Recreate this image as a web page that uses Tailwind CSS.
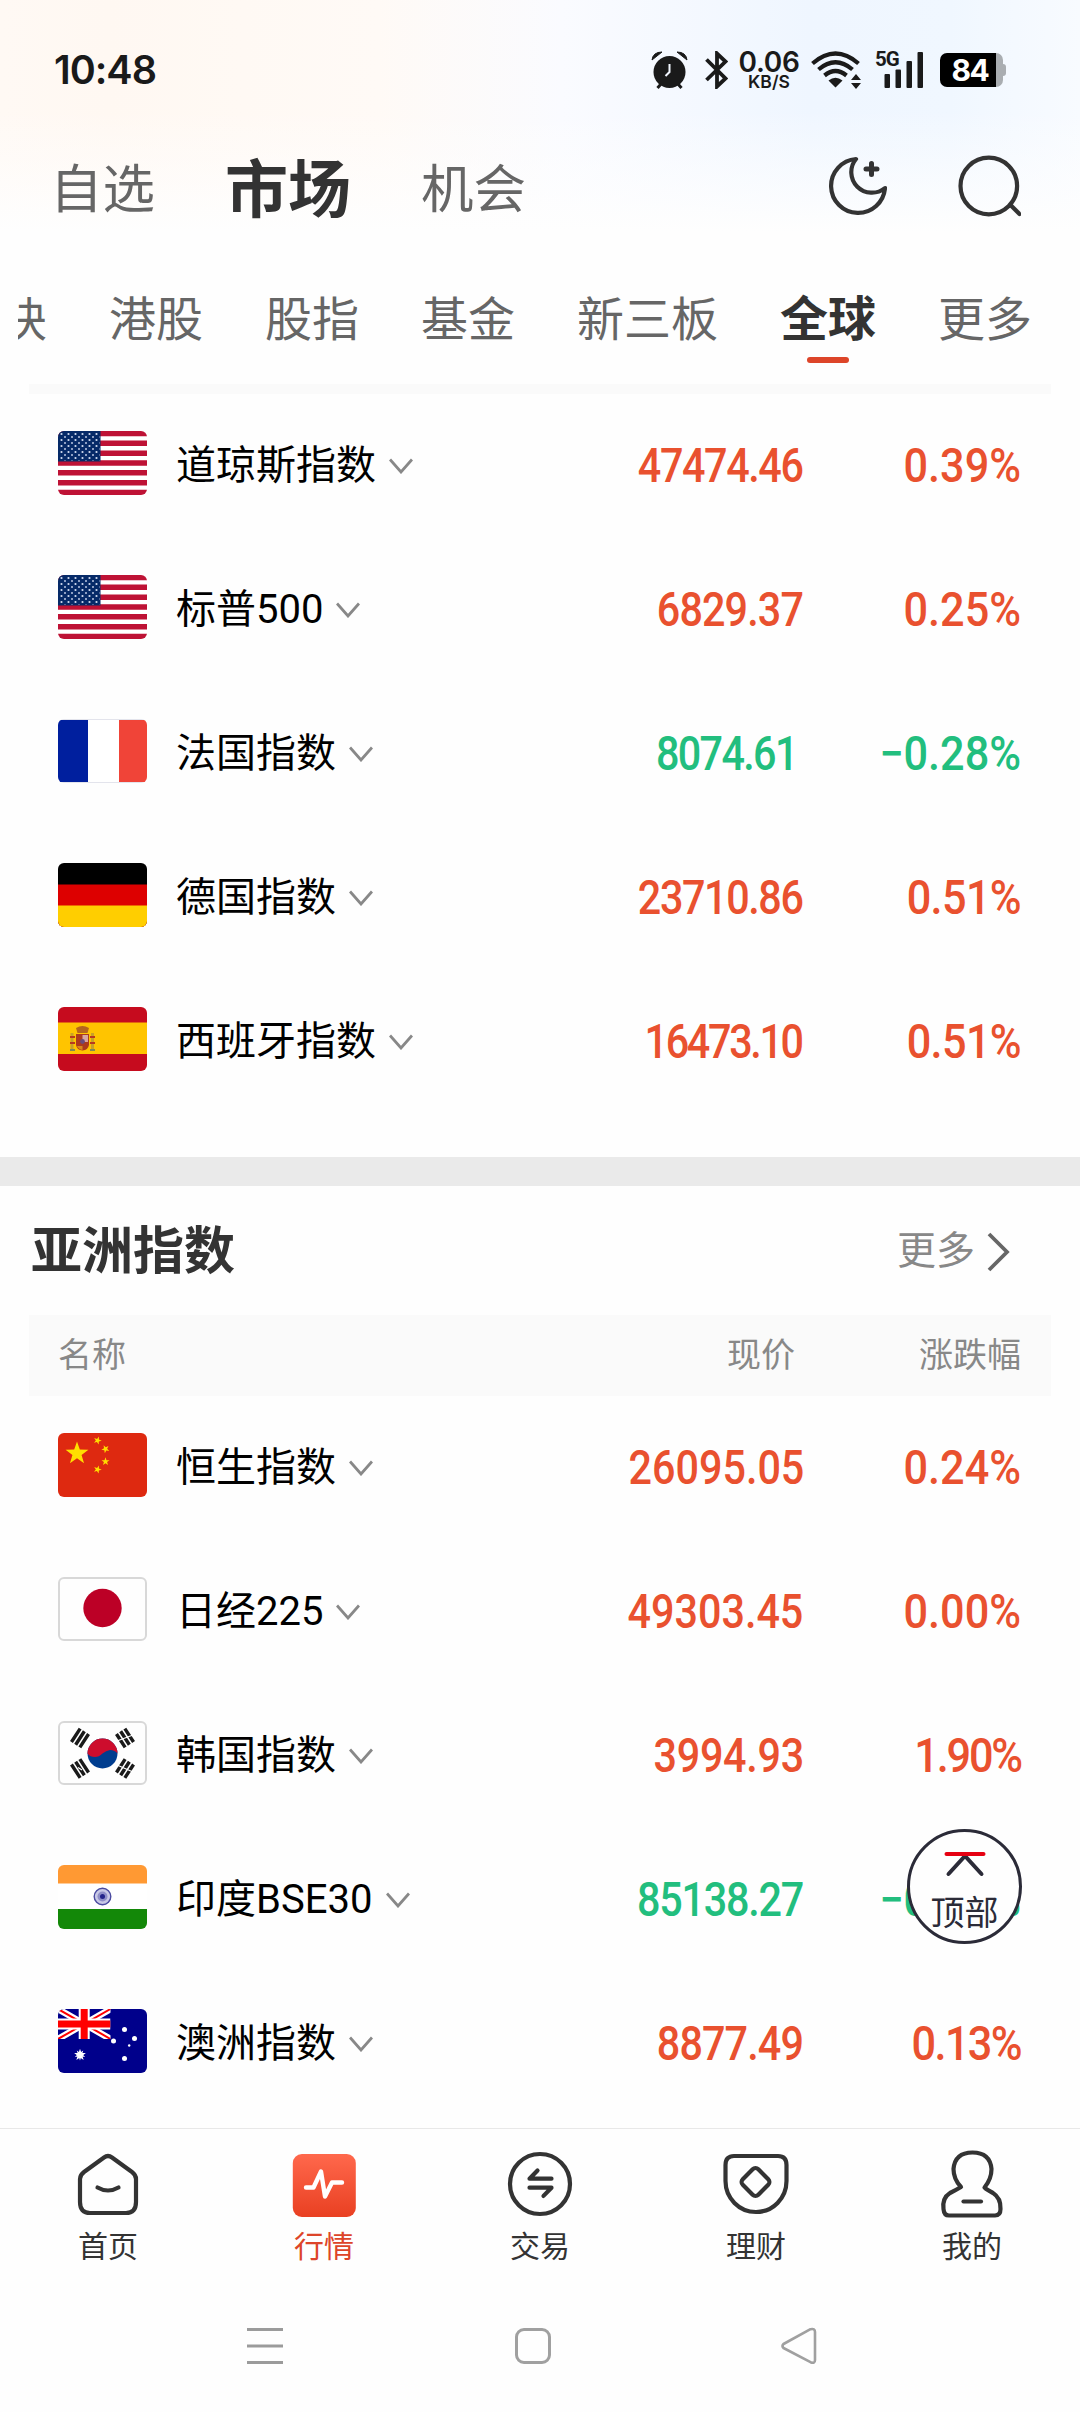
<!DOCTYPE html>
<html lang="zh-CN">
    <head>
        <meta charset="UTF-8" />
        <meta name="viewport" content="width=device-width, initial-scale=1.0" />
        <script src="https://cdn.jsdelivr.net/npm/@tailwindcss/browser@4"></script>
        <title>市场 - 全球</title>
    </head>
    <body class="bg-[#fefefe] font-[Roboto,'Noto_Sans_CJK_SC',sans-serif] text-black">
        <!-- Shared shapes -->
        <svg class="absolute h-0 w-0">
            <defs>
                <symbol id="chevron" viewBox="0 0 24 16">
                    <path d="M1 1.5 12 14 23 1.5" fill="none" stroke="#888" stroke-width="2.8" />
                </symbol>
                <polygon
                    id="star"
                    points="0,-10 2.35,-3.24 9.51,-3.09 3.8,1.24 5.88,8.09 0,4 -5.88,8.09 -3.8,1.24 -9.51,-3.09 -2.35,-3.24"
                />
                <pattern id="dots" width="7" height="6" patternUnits="userSpaceOnUse">
                    <circle cx="3.5" cy="3" r="1.1" fill="#d3dcf0" />
                    <circle cx="0" cy="0" r="1" fill="#b9c6e2" />
                    <circle cx="7" cy="0" r="1" fill="#b9c6e2" />
                    <circle cx="0" cy="6" r="1" fill="#b9c6e2" />
                    <circle cx="7" cy="6" r="1" fill="#b9c6e2" />
                </pattern>
                <symbol id="flag-us" viewBox="0 0 89 64">
                    <rect width="89" height="64" fill="#fff" />
                    <path
                        d="M0 2.46H89M0 12.3H89M0 22.2H89M0 32H89M0 41.8H89M0 51.7H89M0 61.5H89"
                        stroke="#be1235"
                        stroke-width="5.4"
                    />
                    <rect width="42.5" height="30.5" fill="#062a68" />
                    <rect x="1" y="1" width="40.5" height="28.5" fill="url(#dots)" />
                </symbol>
                <g id="bars" stroke="#1a1a1a" stroke-width="3.4">
                    <path d="M-8-5H8M-8 0H8M-8 5H8" />
                </g>
            </defs>
        </svg>

        <div class="flex h-[2412px] w-[1080px] flex-col overflow-hidden">
            <header
                class="h-[244px] shrink-0 bg-[linear-gradient(to_bottom,transparent_110px,#fefefe_232px),linear-gradient(to_right,#fff9f4,#fff8f2_10%,#fffaf6_35%,#fafbff_52%,#eff6ff_75%,#f0f7ff_88%,#f8fbff)]"
            >
                <!-- Status bar -->
                <div class="flex h-[140px] items-center justify-between pr-[74px] pl-[54px]">
                    <div class="pt-[2px] font-[Inter] text-[39.5px] font-semibold tracking-[-1px] text-[#1a1a1a]">10:48</div>
                    <div class="flex items-center text-[#1a1a1a]">
                        <!-- Alarm -->
                        <svg class="h-[38px] w-[37px]" viewBox="0 0 37 38">
                            <circle cx="18.5" cy="21" r="16" fill="currentColor" />
                            <path d="M1 9Q2 1 11 1Z M36 9Q35 1 26 1Z" fill="currentColor" stroke="currentColor" />
                            <path d="M10 33 6.5 37M27 33 30.5 37" stroke="currentColor" stroke-width="3" />
                            <path d="M18.5 13V21L14.5 25" fill="none" stroke="#f2f7ff" stroke-width="2" />
                        </svg>
                        <!-- Bluetooth -->
                        <svg class="ml-[17px] h-[38px] w-[23px]" viewBox="0 0 23 38">
                            <path
                                d="M1.5 8.5 20.5 27.5 12 35.5V2.5L20.5 10.5 1.5 29"
                                fill="none"
                                stroke="currentColor"
                                stroke-width="3.8"
                            />
                        </svg>
                        <div class="ml-[12px] flex w-[58px] flex-col items-center font-[Inter] font-semibold">
                            <span class="text-[28px] leading-[23px] tracking-[-0.3px]">0.06</span>
                            <span class="text-[17.5px] leading-[15px]">KB/S</span>
                        </div>
                        <!-- Wifi -->
                        <svg class="ml-[13px] h-[38px] w-[51px]" viewBox="0 0 51 38">
                            <g fill="none" stroke="currentColor" stroke-width="4.2">
                                <path d="M1.5 12.5Q24.5-7.5 47.5 12.5" />
                                <path d="M7.5 18.5Q24.5 4 41.5 18.5" />
                                <path d="M13.5 24.5Q24.5 15.5 35.5 24.5" />
                            </g>
                            <path
                                d="M24.5 36.5 17.5 29.5Q24.5 24 31.5 29.5Z M40 29 45 23 50 29Z M40 32H50L45 38Z"
                                fill="currentColor"
                            />
                        </svg>
                        <div class="relative ml-[13px] h-[38px] w-[48px]">
                            <span class="absolute -top-[2px] left-0 font-[Roboto] text-[20.5px] leading-5 font-bold tracking-[-1px]"
                                >5G</span
                            >
                            <svg class="h-[38px] w-[48px]" viewBox="0 0 48 38" fill="currentColor">
                                <rect x="9.5" y="23" width="5.5" height="14" rx="1" />
                                <rect x="20.5" y="18.5" width="5.5" height="18.5" rx="1" />
                                <rect x="31.5" y="10" width="5.5" height="27" rx="1" />
                                <rect x="42.5" y="1" width="5.5" height="36" rx="1" />
                            </svg>
                        </div>
                        <!-- Battery -->
                        <div class="ml-[17px] flex items-center">
                            <div
                                class="flex h-[34px] w-[56px] items-center justify-center rounded-l-[7px] bg-black pl-[4px] font-[Inter] text-[30px] font-bold tracking-[-1.5px] text-white"
                            >
                                84
                            </div>
                            <div class="h-[34px] w-[7px] rounded-r-[7px] bg-[#a9adb1]"></div>
                            <div class="h-3 w-[3px] rounded-r bg-[#a9adb1]"></div>
                        </div>
                    </div>
                </div>

                <!-- Main tabs -->
                <div class="flex h-[92px] items-center pr-[59px] pl-[50px] text-[#666]">
                    <div class="flex flex-1 items-center gap-[70px] pt-[8px]">
                        <a class="text-[52.5px] leading-none">自选</a>
                        <a class="text-[63px] leading-none font-bold text-[#333]">市场</a>
                        <a class="text-[52.5px] leading-none">机会</a>
                    </div>
                    <svg
                        class="h-[60px] w-[60px]"
                        viewBox="827 156 60 60"
                        fill="none"
                        stroke="#333"
                        stroke-width="4.2"
                        stroke-linejoin="round"
                        stroke-linecap="round"
                    >
                        <path d="M856 159A27 27 0 1 0 885 188A20.6 20.6 0 0 1 856 159Z" />
                        <path d="M871.5 163.5V174.5M866 169H877" stroke-width="5" />
                    </svg>
                    <svg
                        class="ml-[70px] h-[62px] w-[64px]"
                        viewBox="957 155 64 62"
                        fill="none"
                        stroke="#333"
                        stroke-width="4.2"
                        stroke-linecap="round"
                    >
                        <circle cx="988.8" cy="186" r="28.3" />
                        <path d="M1010.5 205 1019.5 214" />
                    </svg>
                </div>
            </header>

            <!-- Category tabs -->
            <nav class="ml-[18px] flex h-[140px] shrink-0 gap-[62px] overflow-hidden pt-[51px] text-[47px] leading-[50px] whitespace-nowrap text-[#666]">
                <a class="-ml-[18px]">块</a>
                <a>港股</a>
                <a>股指</a>
                <a>基金</a>
                <a>新三板</a>
                <a class="flex flex-col items-center text-[48px] font-bold text-[#333]">
                    全球
                    <span class="mt-[12px] h-[6px] w-[42px] rounded-full bg-[#dd4529]"></span>
                </a>
                <a>更多</a>
            </nav>

            <div class="mx-[29px] h-[10px] shrink-0 bg-[#fafafa]"></div>

            <!-- Europe & America -->
            <section class="-mt-[3px] h-[766px] shrink-0 pr-[59px] pl-[58px] text-[40px]">
                <div class="flex h-36 items-center">
                    <svg class="h-16 w-[89px] rounded-md"><use href="#flag-us" /></svg>
                    <span class="ml-[29px] pt-[5px]">道琼斯指数</span>
                    <svg class="ml-[13px] h-4 w-6 flex-none translate-y-[3px]"><use href="#chevron" /></svg>
                    <span class="ml-auto origin-right scale-x-86 pt-[6px] text-[48px] font-medium tracking-[-1.6px] text-[#e9512f]">47474.46</span>
                    <span class="w-[218px] origin-right scale-x-90 pt-[6px] text-right text-[48px] font-medium text-[#e9512f]">0.39%</span>
                </div>
                <div class="flex h-36 items-center">
                    <svg class="h-16 w-[89px] rounded-md"><use href="#flag-us" /></svg>
                    <span class="ml-[29px] pt-[5px]">标普500</span>
                    <svg class="ml-[13px] h-4 w-6 flex-none translate-y-[3px]"><use href="#chevron" /></svg>
                    <span class="ml-auto origin-right scale-x-86 pt-[6px] text-[48px] font-medium tracking-[-1px] text-[#e9512f]">6829.37</span>
                    <span class="w-[218px] origin-right scale-x-90 pt-[6px] text-right text-[48px] font-medium text-[#e9512f]">0.25%</span>
                </div>
                <div class="flex h-36 items-center">
                    <svg class="h-16 w-[89px] rounded-md" viewBox="0 0 89 64">
                        <rect width="89" height="64" fill="#e3e4ec" />
                        <rect y="1" width="89" height="62" fill="#fff" />
                        <rect y="1" width="30" height="62" fill="#001f9e" />
                        <rect x="61" y="1" width="28" height="62" fill="#f04438" />
                    </svg>
                    <span class="ml-[29px] pt-[5px]">法国指数</span>
                    <svg class="ml-[13px] h-4 w-6 flex-none translate-y-[3px]"><use href="#chevron" /></svg>
                    <span class="mr-[6px] ml-auto origin-right scale-x-86 pt-[6px] text-[48px] font-medium tracking-[-1.9px] text-[#22be7e]">8074.61</span>
                    <span class="w-[218px] origin-right scale-x-90 pt-[6px] text-right text-[48px] font-medium text-[#22be7e]">−0.28%</span>
                </div>
                <div class="flex h-36 items-center">
                    <svg class="h-16 w-[89px] rounded-md" viewBox="0 0 89 64">
                        <rect width="89" height="64" fill="#000" />
                        <rect y="21.5" width="89" height="43" fill="#dd0000" />
                        <rect y="42.5" width="89" height="22" fill="#ffce00" />
                    </svg>
                    <span class="ml-[29px] pt-[5px]">德国指数</span>
                    <svg class="ml-[13px] h-4 w-6 flex-none translate-y-[3px]"><use href="#chevron" /></svg>
                    <span class="ml-auto origin-right scale-x-86 pt-[6px] text-[48px] font-medium tracking-[-1.6px] text-[#e9512f]">23710.86</span>
                    <span class="w-[218px] origin-right scale-x-90 pt-[6px] text-right text-[48px] font-medium tracking-[-0.7px] text-[#e9512f]">0.51%</span>
                </div>
                <div class="flex h-36 items-center">
                    <svg class="h-16 w-[89px] rounded-md" viewBox="0 0 89 64">
                        <rect width="89" height="64" fill="#c60b1e" />
                        <rect y="15.5" width="89" height="31.5" fill="#ffc400" />
                        <path d="M14 26V42M34.5 26V42" stroke="#c9a227" stroke-width="3" />
                        <path d="M12 30H17M12 36H17M32 30H37M32 36H37" stroke="#b8391f" stroke-width="1.8" />
                        <path d="M12 43H17M32 43H37" stroke="#7d8a55" stroke-width="2" />
                        <path d="M18 21Q24.5 17 31 21L29.5 26H19.5Z" fill="#b5651d" />
                        <path d="M18 27H31V38Q30 43 24.5 43.5Q19 43 18 38Z" fill="#ad3a1c" />
                        <path d="M24.5 28H30V35H24.5Z" fill="#d9a6a0" />
                        <circle cx="24.5" cy="34.5" r="2.4" fill="#6a4a7a" />
                        <path d="M19 39H24.5V43Q20 42 19 39Z" fill="#d88a1a" />
                    </svg>
                    <span class="ml-[29px] pt-[5px]">西班牙指数</span>
                    <svg class="ml-[13px] h-4 w-6 flex-none translate-y-[3px]"><use href="#chevron" /></svg>
                    <span class="ml-auto origin-right scale-x-86 pt-[6px] text-[48px] font-medium tracking-[-2.7px] text-[#e9512f]">16473.10</span>
                    <span class="w-[219px] origin-right scale-x-90 pt-[6px] text-right text-[48px] font-medium tracking-[-0.7px] text-[#e9512f]">0.51%</span>
                </div>
            </section>

            <div class="h-[29px] shrink-0 bg-[#eaeaea]"></div>

            <!-- Asia -->
            <div class="flex h-[129px] shrink-0 items-center justify-between pt-[2px] pr-[70px] pl-[31px]">
                <h2 class="text-[51px] leading-none font-bold text-[#333]">亚洲指数</h2>
                <a class="flex items-center text-[39px] leading-none text-[#888]">
                    更多
                    <svg class="ml-[11px] h-[40px] w-[24px]" viewBox="0 0 24 40" fill="none" stroke="#666" stroke-width="3.8">
                        <path d="M3 2 21 20 3 38" />
                    </svg>
                </a>
            </div>
            <div class="mx-[29px] flex h-[81px] shrink-0 items-center bg-[#fafafa] pr-[30px] pb-[1px] pl-[29px] text-[34px] leading-none text-[#888]">
                <span>名称</span>
                <span class="ml-auto">现价</span>
                <span class="w-[226px] text-right">涨跌幅</span>
            </div>
            <section class="-mt-[3px] h-[735px] shrink-0 pr-[59px] pl-[58px] text-[40px]">
                <div class="flex h-36 items-center">
                    <svg class="h-16 w-[89px] rounded-md" viewBox="0 0 89 64">
                        <rect width="89" height="64" fill="#de2910" />
                        <g fill="#ffde00">
                            <use href="#star" transform="translate(19 20.5) scale(1.2)" />
                            <use href="#star" transform="translate(39.5 7.5) rotate(20) scale(.42)" />
                            <use href="#star" transform="translate(47.5 16) rotate(45) scale(.42)" />
                            <use href="#star" transform="translate(47.5 28.5) scale(.42)" />
                            <use href="#star" transform="translate(39.5 36.5) rotate(20) scale(.42)" />
                        </g>
                    </svg>
                    <span class="ml-[29px] pt-[5px]">恒生指数</span>
                    <svg class="ml-[13px] h-4 w-6 flex-none translate-y-[3px]"><use href="#chevron" /></svg>
                    <span class="ml-auto origin-right scale-x-86 pt-[6px] text-[48px] font-medium text-[#e9512f]">26095.05</span>
                    <span class="w-[217px] origin-right scale-x-90 pt-[6px] text-right text-[48px] font-medium text-[#e9512f]">0.24%</span>
                </div>
                <div class="flex h-36 items-center">
                    <svg class="h-16 w-[89px] rounded-md border-2 border-[#d8d8d8]" viewBox="2 2 85 60">
                        <circle cx="44.5" cy="31" r="19.2" fill="#bc0026" />
                    </svg>
                    <span class="ml-[29px] pt-[5px]">日经225</span>
                    <svg class="ml-[13px] h-4 w-6 flex-none translate-y-[3px]"><use href="#chevron" /></svg>
                    <span class="ml-auto origin-right scale-x-86 pt-[6px] text-[48px] font-medium text-[#e9512f]">49303.45</span>
                    <span class="w-[218px] origin-right scale-x-90 pt-[6px] text-right text-[48px] font-medium text-[#e9512f]">0.00%</span>
                </div>
                <div class="flex h-36 items-center">
                    <svg class="h-16 w-[89px] rounded-md border-2 border-[#d8d8d8]" viewBox="2 2 85 60">
                        <circle cx="44.5" cy="32.5" r="15" fill="#003d8f" />
                        <path
                            d="M29.5 32.5A15 15 0 0 1 59.5 32.5Q57 29 52 29Q48 29.5 44.5 32.5Q41 36 37 36Q32 36 29.5 32.5Z"
                            fill="#cd0d2d"
                        />
                        <use href="#bars" transform="translate(22 17) rotate(-57)" />
                        <use href="#bars" transform="translate(67 17) rotate(57)" />
                        <use href="#bars" transform="translate(22 47.5) rotate(57)" />
                        <use href="#bars" transform="translate(67 47.5) rotate(-57)" />
                        <path d="M59 20 75 14M20 46.5 24 49M59 44 75 51" stroke="#fff" stroke-width="1.2" />
                    </svg>
                    <span class="ml-[29px] pt-[5px]">韩国指数</span>
                    <svg class="ml-[13px] h-4 w-6 flex-none translate-y-[3px]"><use href="#chevron" /></svg>
                    <span class="ml-auto origin-right scale-x-86 pt-[6px] text-[48px] font-medium tracking-[-0.3px] text-[#e9512f]">3994.93</span>
                    <span class="w-[217px] origin-right scale-x-90 pt-[6px] text-right text-[48px] font-medium tracking-[-2.4px] text-[#e9512f]">1.90%</span>
                </div>
                <div class="relative flex h-36 items-center">
                    <svg class="h-16 w-[89px] rounded-md" viewBox="0 0 89 64">
                        <rect width="89" height="64" fill="#fff" />
                        <rect width="89" height="18.5" fill="#ff9933" />
                        <rect y="44" width="89" height="20" fill="#138808" />
                        <circle cx="44.5" cy="31.5" r="8.3" fill="#c9c9e6" stroke="#4a4aa0" stroke-width="1.4" />
                        <circle cx="44.5" cy="31.5" r="5" fill="#8f8fc8" />
                        <circle cx="44.5" cy="31.5" r="2.5" fill="#24248a" />
                    </svg>
                    <span class="ml-[29px] pt-[5px]">印度BSE30</span>
                    <svg class="ml-[14px] h-4 w-6 flex-none translate-y-[3px]"><use href="#chevron" /></svg>
                    <span class="ml-auto origin-right scale-x-86 pt-[6px] text-[48px] font-medium tracking-[-1.4px] text-[#22be7e]">85138.27</span>
                    <span class="w-[218px] origin-right scale-x-90 pt-[6px] text-right text-[48px] font-medium text-[#22be7e]">−0.08%</span>
                    <!-- Back to top -->
                    <button
                        class="absolute top-[4px] -right-[1px] flex h-[115px] w-[115px] flex-col items-center rounded-full border-[3px] border-[#2b2b38] bg-[#fefefe] pt-[19px] text-[34px] leading-[34px] text-[#2b2b38]"
                    >
                        <svg class="h-[26px] w-[42px]" viewBox="0 0 42 26" fill="none" stroke-width="4" stroke-linecap="round">
                            <path d="M4.5 23 21 5 37.5 23" stroke="#2b2b38" />
                            <path d="M2.5 3H39.5" stroke="#e60012" />
                        </svg>
                        <span class="mt-[19px]">顶部</span>
                    </button>
                </div>
                <div class="flex h-36 items-center">
                    <svg class="h-16 w-[89px] rounded-md" viewBox="0 0 89 64">
                        <rect width="89" height="64" fill="#00008b" />
                        <svg width="52.5" height="30" viewBox="0 0 52.5 30">
                            <path d="M0 0 52.5 30M52.5 0 0 30" stroke="#fff" stroke-width="6.5" />
                            <path d="M0 0 52.5 30M52.5 0 0 30" stroke="#f00" stroke-width="2" />
                            <path d="M26.2 0V30M0 15H52.5" stroke="#fff" stroke-width="11" />
                            <path d="M26.2 0V30M0 15H52.5" stroke="#f00" stroke-width="7" />
                        </svg>
                        <g fill="#fff">
                            <use href="#star" transform="translate(22 46) scale(.62)" />
                            <use href="#star" transform="translate(22 46) rotate(180) scale(.55)" />
                            <circle cx="66.5" cy="20.5" r="2.5" />
                            <circle cx="76.5" cy="29.5" r="2.5" />
                            <circle cx="55.5" cy="32" r="2.5" />
                            <circle cx="66.5" cy="49.5" r="2.5" />
                            <circle cx="71.2" cy="36.5" r="1.2" />
                        </g>
                    </svg>
                    <span class="ml-[29px] pt-[5px]">澳洲指数</span>
                    <svg class="ml-[13px] h-4 w-6 flex-none translate-y-[3px]"><use href="#chevron" /></svg>
                    <span class="ml-auto origin-right scale-x-86 pt-[6px] text-[48px] font-medium tracking-[-1px] text-[#e9512f]">8877.49</span>
                    <span class="w-[218px] origin-right scale-x-90 pt-[6px] text-right text-[48px] font-medium tracking-[-1.8px] text-[#e9512f]">0.13%</span>
                </div>
            </section>

            <!-- Bottom tab bar -->
            <nav class="grid h-[152px] shrink-0 grid-cols-5 border-t border-[#e8e8e8] pt-[20px] text-center text-[30px] leading-[30px] text-[#333]">
                <a class="flex flex-col items-center gap-[13px]">
                    <svg class="h-[70px] w-[70px]" viewBox="0 0 70 70" fill="none" stroke="#333" stroke-width="4.2" stroke-linecap="round">
                        <path d="M31 8.5Q35 5.5 39 8.5L59 23Q63 26 63 30V53Q63 64 53 64H17Q7 64 7 53V30Q7 26 11 23Z" />
                        <path d="M24.5 38.5Q35 44.5 45.5 38.5" />
                    </svg>
                    首页
                </a>
                <a class="flex flex-col items-center gap-[13px] text-[#dd4529]">
                    <svg class="h-[70px] w-[70px]" viewBox="0 0 70 70">
                        <defs>
                            <linearGradient id="hot" x2="0" y2="1">
                                <stop stop-color="#ff684c" />
                                <stop offset="1" stop-color="#e94022" />
                            </linearGradient>
                        </defs>
                        <rect x="3.8" y="5" width="63" height="63" rx="9" fill="url(#hot)" />
                        <path
                            d="M17 38.5H24.5L32 22.5 36 47.5 43 33.5H53"
                            fill="none"
                            stroke="#fff"
                            stroke-width="4.4"
                            stroke-linecap="round"
                            stroke-linejoin="round"
                        />
                    </svg>
                    行情
                </a>
                <a class="flex flex-col items-center gap-[13px]">
                    <svg class="h-[70px] w-[70px]" viewBox="0 0 70 70" fill="none" stroke="#333" stroke-width="4.2" stroke-linecap="round" stroke-linejoin="round">
                        <circle cx="35" cy="35" r="30" />
                        <path d="M46.5 29.7H24.5L32.5 21.5M24.5 38.7H46.5L38.5 46.9" />
                    </svg>
                    交易
                </a>
                <a class="flex flex-col items-center gap-[13px]">
                    <svg class="h-[70px] w-[70px]" viewBox="0 0 70 70" fill="none" stroke="#333" stroke-width="4.2">
                        <path d="M13 7H57Q65.5 7 65.5 16V32A30.5 31 0 0 1 4.5 32V16Q4.5 7 13 7Z" />
                        <rect x="23.5" y="22" width="22" height="22" rx="4" transform="rotate(45 34.5 33)" />
                    </svg>
                    理财
                </a>
                <a class="flex flex-col items-center gap-[13px]">
                    <svg class="h-[70px] w-[70px]" viewBox="0 0 70 70" fill="none" stroke="#333" stroke-width="4.2" stroke-linecap="round" stroke-linejoin="round">
                        <path
                            d="M24 38Q16.5 30 16.5 20Q18 3.5 35.5 3.5Q53 3.5 54.5 20Q54.5 30 47.5 38.5Q50 41 56 44Q64 49 63.5 60Q63.5 66.5 58 66.5H12Q7 66.5 6.5 60Q5 49 13 44Q19 41 24 38Z"
                        />
                        <path d="M26.5 52.5H44" />
                    </svg>
                    我的
                </a>
            </nav>

            <!-- System navigation -->
            <div class="flex grow items-start pt-[46px] pl-[247px]">
                <svg class="h-[40px] w-[36px]" viewBox="0 0 36 40">
                    <path d="M0 3.5H36M0 20H36M0 36.5H36" stroke="#9b9b9b" stroke-width="3" />
                </svg>
                <div class="mt-[2px] ml-[232px] h-[36px] w-[36px] rounded-[9px] border-[3px] border-[#a0a0a0]"></div>
                <svg class="ml-[230px] h-[40px] w-[36px]" viewBox="0 0 36 40" fill="none" stroke="#a0a0a0" stroke-width="2.6" stroke-linejoin="round">
                    <path d="M2.5 18 29.5 3.2Q34 2 34 6V34Q34 38 29.5 36.2L2.5 22Q.5 20 2.5 18Z" />
                </svg>
            </div>
        </div>
    </body>
</html>
